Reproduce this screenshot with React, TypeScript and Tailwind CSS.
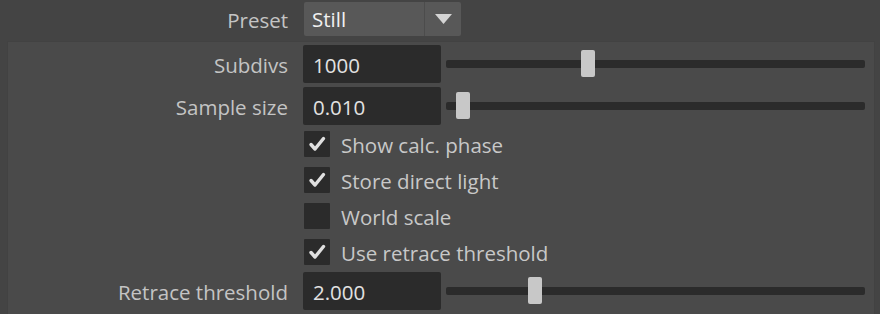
import React from "react"

const font = { fontFamily: "'Open Sans','Noto Sans',sans-serif" }

function Slider({ pos }: { pos: number }) {
  return (
    <div className="relative h-[38px] flex-1 flex items-center ml-[5px] mr-[9px]">
      <div className="h-[8px] w-full bg-[#2b2b2b] rounded-[2px]" />
      <div
        className="absolute top-[5px] h-[27px] w-[14px] bg-[#c8c8c8] rounded-[2px]"
        style={{ left: pos }}
      />
    </div>
  )
}

function FieldRow({ label, value, pos }: { label: string; value: string; pos: number }) {
  return (
    <div className="flex items-center h-[38px]">
      <div className="w-[288px] text-right text-[#c4c4c4] pt-[3px]">{label}</div>
      <div className="ml-[15px] w-[138px] h-[38px] bg-[#2b2b2b] rounded-[2px] flex items-center pl-[10px] pt-[3px] text-[#e2e2e2]">
        {value}
      </div>
      <Slider pos={pos} />
    </div>
  )
}

function Check({ label, checked }: { label: string; checked: boolean }) {
  return (
    <div className="flex items-center h-[36px] pl-[304px]">
      <div className="w-[26px] h-[26px] bg-[#2b2b2b] rounded-[1px] flex items-center justify-center">
        {checked && (
          <svg width="20" height="18" viewBox="0 0 20 18">
            <path d="M4 9.5 L8 14 L16.5 3.5" fill="none" stroke="#e0e0e0" strokeWidth="3.4" strokeLinecap="round" strokeLinejoin="round" />
          </svg>
        )}
      </div>
      <span className="ml-[11px] pt-[3px] text-[#c8c8c8]">{label}</span>
    </div>
  )
}

export default function App() {
  return (
    <div className="w-[880px] h-[314px] bg-[#444444] text-[20.5px] leading-none overflow-hidden" style={font}>
      <div className="flex items-center h-[41px]">
        <div className="w-[288px] text-right text-[#c4c4c4]">Preset</div>
        <div className="ml-[16px] mt-[-3px] flex h-[34px] w-[157px] bg-[#585858] rounded-[2px]">
          <div className="flex-1 flex items-center pl-[8px] text-[#f0f0f0]">Still</div>
          <div className="w-[37px] border-l border-[#4c4c4c] flex items-center justify-center">
            <svg width="17" height="10" viewBox="0 0 17 10">
              <path d="M0 0 H17 L8.5 10 Z" fill="#d4d4d4" />
            </svg>
          </div>
        </div>
      </div>
      <div className="ml-[7px] mr-[5px] h-[273px] bg-[#4a4a4a] border-l border-t border-r border-[#424242]">
        <div className="-ml-[8px] pt-[3px] flex flex-col gap-[4px]">
          <FieldRow label="Subdivs" value="1000" pos={135} />
          <FieldRow label="Sample size" value="0.010" pos={10} />
        </div>
        <div className="-ml-[8px] pt-[1px]">
          <Check label="Show calc. phase" checked />
          <Check label="Store direct light" checked />
          <Check label="World scale" checked={false} />
          <Check label="Use retrace threshold" checked />
        </div>
        <div className="-ml-[8px] pt-[2px]">
          <FieldRow label="Retrace threshold" value="2.000" pos={82} />
        </div>
      </div>
    </div>
  )
}
